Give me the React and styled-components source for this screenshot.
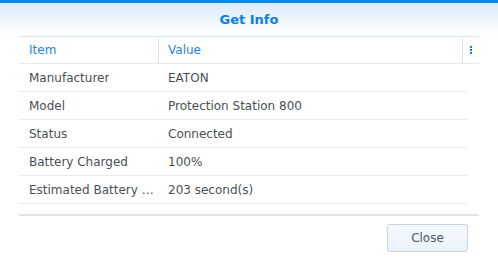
import styled, { createGlobalStyle } from "styled-components"

const GlobalStyle = createGlobalStyle`
  body {
    margin: 0;
    background: #fff;
    font-family: "DejaVu Sans", Verdana, sans-serif;
  }
`;

const Dialog = styled.div`
  width: 498px;
  height: 259px;
  display: flex;
  flex-direction: column;
  border-top: 3px solid #0a86e4;
  box-sizing: border-box;
  background: #fff;
`;

const TitleBar = styled.div`
  height: 33px;
  display: flex;
  align-items: center;
  justify-content: center;
  background: linear-gradient(to bottom, #dbebfa, #ffffff);
  color: #0a80e0;
  font-weight: bold;
  font-size: 13px;
`;

const Grid = styled.div`
  margin: 0 19px;
  height: 178px;
  display: flex;
  flex-direction: column;
  border-bottom: 2px solid #e2e2e2;
`;

const HeadRow = styled.div`
  display: flex;
  height: 26px;
  border-top: 1px solid #d6e3f1;
  border-bottom: 1px solid #e4ebf2;
  font-size: 12px;
  color: #1e86e6;
`;

const HeadCell = styled.div`
  width: ${p => p.$w}px;
  flex: ${p => (p.$grow ? 1 : "none")};
  display: flex;
  align-items: center;
  padding-left: ${p => p.$pad}px;
  box-sizing: border-box;
  border-right: ${p => (p.$divider ? "1px solid #d8e4f0" : "none")};
`;

const MenuDots = styled.div`
  width: 16px;
  display: flex;
  flex-direction: column;
  align-items: center;
  justify-content: center;
  gap: 1px;

  span {
    width: 2px;
    height: 2px;
    background: #0a80e0;
  }
`;

const Row = styled.div`
  display: flex;
  width: 449px;
  height: 28px;
  border-bottom: 1px solid #ebebeb;
  box-sizing: border-box;
  font-size: 12px;
  color: #4a4f55;
`;

const Cell = styled.div`
  width: ${p => p.$w}px;
  flex: ${p => (p.$grow ? 1 : "none")};
  display: flex;
  align-items: center;
  padding-left: ${p => p.$pad}px;
  padding-right: 3px;
  box-sizing: border-box;
  overflow: hidden;

  span {
    white-space: pre;
    overflow: hidden;
    text-overflow: ellipsis;
  }
`;

const Footer = styled.div`
  display: flex;
  justify-content: flex-end;
  padding: 8px 30px 0 0;
`;

const Button = styled.button`
  width: 81px;
  height: 28px;
  border: 1px solid #c5d3e2;
  border-radius: 3px;
  background: linear-gradient(to bottom, #f6fafe, #eaf2fb);
  color: #505a64;
  font-family: "DejaVu Sans", Verdana, sans-serif;
  font-size: 12px;
  padding: 0;
`;

const rows = [
  { item: "Manufacturer", value: "EATON" },
  { item: "Model", value: "Protection Station 800" },
  { item: "Status", value: "Connected" },
  { item: "Battery Charged", value: "100%" },
  { item: "Estimated Battery Runtime", value: "203 second(s)" },
];

const App = () => {
  return (
    <>
      <GlobalStyle />
      <Dialog>
        <TitleBar>Get Info</TitleBar>
        <Grid>
          <HeadRow>
            <HeadCell $w={140} $pad={10} $divider>Item</HeadCell>
            <HeadCell $grow $pad={9} $divider>Value</HeadCell>
            <MenuDots><span /><span /><span /></MenuDots>
          </HeadRow>
          {rows.map(r => (
            <Row key={r.item}>
              <Cell $w={140} $pad={10}><span>{r.item}</span></Cell>
              <Cell $grow $pad={9}><span>{r.value}</span></Cell>
            </Row>
          ))}
        </Grid>
        <Footer>
          <Button>Close</Button>
        </Footer>
      </Dialog>
    </>
  )
}

export default App
